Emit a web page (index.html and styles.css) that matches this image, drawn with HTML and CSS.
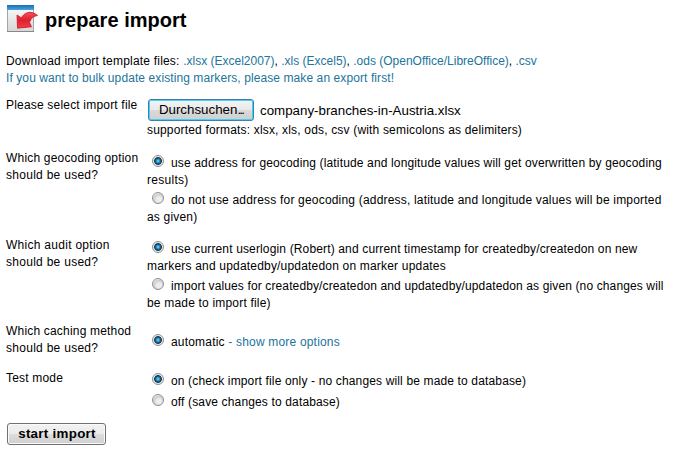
FILE: index.html
```
<!DOCTYPE html>
<html lang="en">
<head>
<meta charset="utf-8">
<title>prepare import</title>
<link rel="stylesheet" href="styles.css">
</head>
<body>
<header class="title">
  <svg class="icon" width="32" height="29" viewBox="0 0 32 29">
    <defs>
      <linearGradient id="paper" x1="0" y1="0" x2="0" y2="1"><stop offset="0" stop-color="#fbfbfb"/><stop offset="1" stop-color="#d6d6d6"/></linearGradient>
      <linearGradient id="bar" x1="0" y1="0" x2="0" y2="1"><stop offset="0" stop-color="#1d6fb0"/><stop offset="1" stop-color="#43a5df"/></linearGradient>
      <linearGradient id="arrow" x1="0" y1="0" x2="0" y2="1"><stop offset="0" stop-color="#f2525c"/><stop offset=".5" stop-color="#e21e2b"/><stop offset="1" stop-color="#ee3f4a"/></linearGradient>
    </defs>
    <rect x=".5" y=".5" width="26" height="26" fill="url(#paper)" stroke="#a5a5a5"/>
    <path d="M0 26.500h27" stroke="#888" stroke-width="1"/>
    <rect x="0" y="0" width="27" height="5" fill="url(#bar)"/>
    <path d="M10 10L14.500 13C16.500 8 24 4.500 30.500 10.500C27 11 24 13 22.500 17.500L24.500 21.800L10.500 23.200Z" fill="url(#arrow)" stroke="#c91724" stroke-width=".8" stroke-linejoin="round"/>
  </svg>
  <h1>prepare import</h1>
</header>
<div class="intro">
  <p><span class="lead">Download import template files: </span><a>.xlsx (Excel2007)</a>, <a>.xls (Excel5)</a>, <a>.ods (OpenOffice/LibreOffice)</a>, <a>.csv</a></p>
  <p class="hint"><a>If you want to bulk update existing markers, please make an export first!</a></p>
</div>
<form class="form">
  <div class="row file-row">
    <div class="label">Please select import file</div>
    <div>
      <div class="file"><button type="button" class="browse">Durchsuchen<span class="dots">...</span></button><span class="name">company-branches-in-Austria.xlsx</span></div>
      <div class="formats">supported formats: xlsx, xls, ods, csv (with semicolons as delimiters)</div>
    </div>
  </div>
  <div class="row geo-row">
    <div class="label">Which geocoding option<br><span class="wide">should be used?</span></div>
    <div class="options">
      <label class="option"><i class="radio on"></i><span class="snug">use address for geocoding (latitude and longitude values will get overwritten by geocoding</span><br><span class="wide">results)</span></label>
      <label class="option"><i class="radio"></i>do not use address for geocoding (address, latitude and longitude values will be imported<br>as given)</label>
    </div>
  </div>
  <div class="row audit-row">
    <div class="label"><span class="wide">Which audit option</span><br><span class="wide">should be used?</span></div>
    <div class="options">
      <label class="option"><i class="radio on"></i><span class="snug">use current userlogin (Robert) and current timestamp for createdby/createdon on new</span><br>markers and updatedby/updatedon on marker updates</label>
      <label class="option"><i class="radio"></i><span class="tight">import values for createdby/createdon and updatedby/updatedon as given (no changes will</span><br>be made to import file)</label>
    </div>
  </div>
  <div class="row cache-row">
    <div class="label">Which caching method<br><span class="wide">should be used?</span></div>
    <div class="options single">
      <label class="option"><i class="radio on"></i>automatic <a>- show more options</a></label>
    </div>
  </div>
  <div class="row test-row">
    <div class="label">Test mode</div>
    <div class="options test">
      <label class="option"><i class="radio on"></i><span class="snug">on (check import file only - no changes will be made to database)</span></label>
      <label class="option"><i class="radio"></i><span class="snug">off (save changes to database)</span></label>
    </div>
  </div>
  <button type="button" class="submit">start import</button>
</form>
</body>
</html>
```
FILE: styles.css
```
* { box-sizing: border-box; }
body {
  margin: 0;
  padding: 5px 0 0 6px;
  height: 453px;
  overflow: hidden;
  background: #fff;
  color: #000;
  font: 12px/17px "Liberation Sans", Arial, sans-serif;
  white-space: nowrap;
}
h1, p { margin: 0; }
a { color: #21759b; }
.title { display: flex; height: 48px; padding-left: 1px; }
.icon { display: block; flex: none; }
h1 { margin-left: 6px; font-size: 20px; line-height: 30px; letter-spacing: .03px; }
.intro { height: 44px; }
.lead { letter-spacing: .2px; }
.hint { letter-spacing: .09px; }
.form { letter-spacing: .19px; }
.wide { letter-spacing: .28px; }
.snug { letter-spacing: .147px; }
.tight { letter-spacing: .125px; }
.row { display: grid; grid-template-columns: 141px 1fr; }
.file-row { height: 53px; }
.geo-row { height: 87px; }
.audit-row { height: 86px; }
.cache-row { height: 47px; }
.test-row { height: 53px; }
.file { display: flex; align-items: center; height: 24px; margin-top: 1px; }
.formats { letter-spacing: .175px; }
.browse {
  width: 106px;
  height: 22px;
  margin-left: 1px;
  padding: 0;
  border: 1px solid #3c7fb1;
  border-radius: 3px;
  box-shadow: inset 0 0 0 1px #48d0f4;
  background: linear-gradient(#f4f4f4, #e9e9e9 48%, #dadada 52%, #cfcfcf);
  font: 13.33px/18px "Liberation Sans", Arial, sans-serif;
  letter-spacing: 0;
  color: #000;
}
.dots { letter-spacing: -1.8px; }
.name { margin-left: 6px; font-size: 13.33px; letter-spacing: 0; }
.options { padding-top: 5px; }
.audit-row .options { padding-top: 4px; }
.option { display: block; height: 37px; }
.options.single { padding-top: 11px; }
.options.test { padding-top: 3px; }
.test .option { height: 21px; }
.radio {
  display: inline-block;
  width: 12px;
  height: 12px;
  margin: 0 7px 0 5px;
  vertical-align: 0;
  border: 1px solid #8e8f8f;
  border-radius: 50%;
  background: radial-gradient(circle at 60% 65%, #eee 0 25%, #ccc 60%, #eee 72%);
}
.radio.on { background: radial-gradient(circle closest-side at 50% 50%, #7fdcfb 0, #2a94cb 32%, #12405f 62%, #1b3549 70%, #dcdfe1 84%, #f2f2f2 100%); }
.submit {
  display: block;
  width: 99px;
  height: 22px;
  margin-left: 1px;
  padding: 0;
  border: 1px solid #707070;
  border-radius: 3px;
  box-shadow: inset 0 0 0 1px #fafafa;
  background: linear-gradient(#f2f2f2, #ebebeb 48%, #dddddd 52%, #cfcfcf);
  font: bold 13.33px/18px "Liberation Sans", Arial, sans-serif;
  letter-spacing: .3px;
  text-indent: 1px;
  color: #000;
}
```
